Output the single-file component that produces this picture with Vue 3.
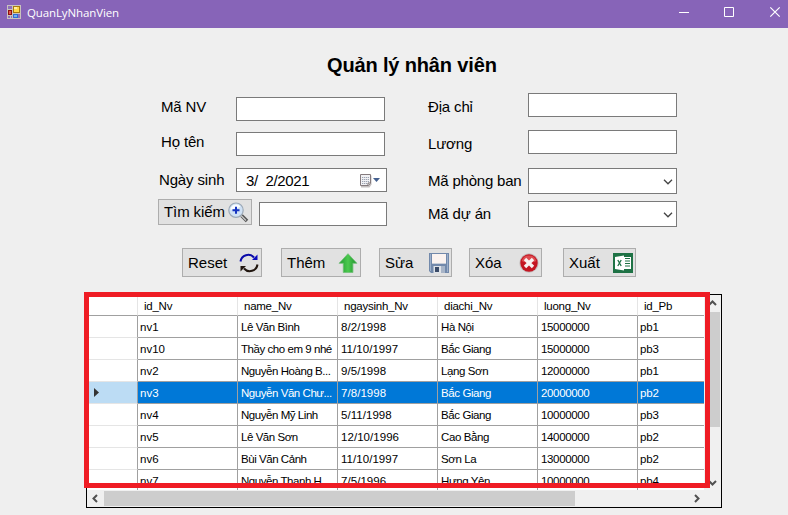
<script setup>
const columns = ['id_Nv', 'name_Nv', 'ngaysinh_Nv', 'diachi_Nv', 'luong_Nv', 'id_Pb']
const rows = [
  ['nv1', 'Lê Văn Bình', '8/2/1998', 'Hà Nội', '15000000', 'pb1'],
  ['nv10', 'Thầy cho em 9 nhé', '11/10/1997', 'Bắc Giang', '15000000', 'pb3'],
  ['nv2', 'Nguyễn Hoàng B...', '9/5/1998', 'Lạng Sơn', '12000000', 'pb1'],
  ['nv3', 'Nguyễn Văn Chư...', '7/8/1998', 'Bắc Giang', '20000000', 'pb2'],
  ['nv4', 'Nguyễn Mỹ Linh', '5/11/1998', 'Bắc Giang', '10000000', 'pb3'],
  ['nv5', 'Lê Văn Sơn', '12/10/1996', 'Cao Bằng', '14000000', 'pb2'],
  ['nv6', 'Bùi Văn Cảnh', '11/10/1997', 'Sơn La', '13000000', 'pb2'],
  ['nv7', 'Nguyễn Thanh H...', '7/5/1996', 'Hưng Yên', '10000000', 'pb4'],
]
const selected = 3
</script>

<template>
  <div class="window">
    <header class="titlebar">
      <svg class="app-icon" width="14" height="14" viewBox="0 0 14 14">
        <rect width="14" height="14" fill="#c9c3bd" />
        <rect x="1" y="1" width="4" height="3" fill="#8f6fba" />
        <rect x="1" y="11" width="2" height="2" fill="#8f6fba" />
        <rect x="4" y="11" width="1" height="2" fill="#8f6fba" />
        <rect x="11" y="9" width="2" height="4" fill="#8f6fba" />
        <rect x="6" y="1" width="7" height="7" fill="#a8790f" />
        <rect x="7" y="2" width="5" height="5" fill="#ffd94a" />
        <rect x="7" y="2" width="3" height="2" fill="#fff0a0" />
        <rect x="1" y="5" width="4" height="5" fill="#8e1010" />
        <rect x="2" y="6" width="2" height="3" fill="#e0564a" />
        <rect x="6" y="9" width="5" height="4" fill="#2f6fd0" />
        <rect x="7" y="10" width="3" height="2" fill="#74acf5" />
      </svg>
      <span class="app-name">QuanLyNhanVien</span>
      <svg class="controls" width="105" height="12" viewBox="0 0 105 12" fill="none" stroke="#fff">
        <path d="M0 6.500H10M45.500 1.500h9v9h-9z" />
        <path d="M91.300 1.300l9.400 9.400M100.700 1.300l-9.400 9.400" stroke-width="1.200" />
      </svg>
    </header>

    <h1>Quản lý nhân viên</h1>

    <section class="form">
      <div class="col left">
        <div class="field r1"><label>Mã NV</label><div class="box"></div></div>
        <div class="field r2"><label>Họ tên</label><div class="box"></div></div>
        <div class="field r3">
          <label>Ngày sinh</label>
          <div class="box date">
            <span>3/&nbsp; 2/2021</span>
            <svg width="22" height="16" viewBox="0 0 22 16">
              <path d="M2 2.500h10.500v9l-2 3H2z" fill="#c4bfbf" />
              <path d="M1.500 1.500h10v9l-2 2h-8z" fill="#f1f1f4" stroke="#857b7e" />
              <path d="M3 4.500h7M3 6.500h7M3 8.500h7M3 10.500h5" stroke="#9ca3b2" stroke-dasharray="1.300 .7" />
              <path d="M9 12.500v-2.500h2.500" fill="#fff" stroke="#776e70" />
              <path d="M14 5h7l-3.500 4z" fill="#44608f" />
            </svg>
          </div>
        </div>
        <div class="search">
          <button class="find">Tìm kiếm
            <svg width="21" height="21" viewBox="0 0 21 21">
              <path d="M13.500 13.500l5.500 5.500" stroke="#555" stroke-width="3.600" />
              <path d="M12.500 13l5.500 5.500" stroke="#c9c9c9" stroke-width="1.300" />
              <circle cx="8" cy="8.200" r="7.200" fill="#cfe1f5" stroke="#9ba8b6" stroke-width="1.200" />
              <path d="M2.500 8a5.700 5.700 0 0 1 10-3.500c-3 2.500-6 1.500-10 3.500z" fill="#fafdff" />
              <path d="M8 4.700v7M4.500 8.200h7" stroke="#1533c0" stroke-width="2" />
            </svg>
          </button>
          <div class="box"></div>
        </div>
      </div>
      <div class="col right">
        <div class="field q1"><label>Địa chỉ</label><div class="box"></div></div>
        <div class="field q2"><label>Lương</label><div class="box"></div></div>
        <div class="field q3"><label>Mã phòng ban</label>
          <div class="box combo"><svg width="10" height="6" viewBox="0 0 10 6"><path d="M1 .8l4 4 4-4" fill="none" stroke="#444" stroke-width="1.300" /></svg></div>
        </div>
        <div class="field q4"><label>Mã dự án</label>
          <div class="box combo"><svg width="10" height="6" viewBox="0 0 10 6"><path d="M1 .8l4 4 4-4" fill="none" stroke="#444" stroke-width="1.300" /></svg></div>
        </div>
      </div>
    </section>

    <section class="actions">
      <button class="wide">Reset
        <svg width="20" height="20" viewBox="0 0 20 20" fill="none">
          <path d="M1.500 8.500C2.500 2 10.500-.5 15 4.500" stroke="#0a0aa8" stroke-width="2" />
          <path d="M18.500 1.500v5.500H13z" fill="#0a0ac0" />
          <path d="M18.500 11.500C17.500 18 9.500 20.500 5 15.500" stroke="#21160f" stroke-width="2" />
          <path d="M1.500 18.500v-5.500H7z" fill="#21160f" />
        </svg>
      </button>
      <button class="wide add">Thêm
        <svg width="20" height="20" viewBox="0 0 20 20">
          <defs><linearGradient id="green" x1="0" x2="1"><stop offset="0" stop-color="#1f9a2e" /><stop offset=".5" stop-color="#4cc94f" /><stop offset="1" stop-color="#1d8f2c" /></linearGradient></defs>
          <path d="M10 .7l8.900 9.600h-4v9.300H5.300v-9.300H1.100z" fill="url(#green)" stroke="#6fbf75" stroke-width=".8" />
        </svg>
      </button>
      <button class="save">Sửa
        <svg width="20" height="20" viewBox="0 0 20 20">
          <path d="M0 0h20v20H2l-2-2z" fill="#7289ab" />
          <path d="M1 1h1v17H1zM18 1h1v18h-1z" fill="#9db0cb" />
          <path d="M3 1h14v10H3z" fill="#fbf3f0" />
          <path d="M3 10h14v1H3z" fill="#c9ced8" />
          <path d="M4.500 13h11v7h-11z" fill="#dfe3e8" />
          <path d="M6 14h4v5H6z" fill="#3a4b68" />
          <path d="M12 13h3v7h-3z" fill="#a8b4c7" />
        </svg>
      </button>
      <button class="del">Xóa
        <svg width="20" height="20" viewBox="0 0 20 20">
          <circle cx="10" cy="10" r="9.700" fill="#c4bfbf" />
          <circle cx="10" cy="10" r="8.700" fill="#c41522" />
          <path d="M2.700 8a7.600 7.600 0 0 1 14.600 0c-4 2-10.600 2-14.600 0z" fill="#de4b50" />
          <path d="M6 6l8 8M14 6l-8 8" stroke="#f7f1f1" stroke-width="3.400" />
        </svg>
      </button>
      <button class="export">Xuất
        <svg width="20" height="20" viewBox="0 0 20 20">
          <path d="M0 0h20v20H0z" fill="#1e7245" />
          <path d="M11 4h7v12h-7z" fill="#fff" />
          <path d="M12 5.500h5M12 8h5M12 10.500h5M12 13h5" stroke="#1e7245" stroke-width="1.200" />
          <path d="M2 4l9-1.500v15L2 16z" fill="#fff" />
          <path d="M4.800 7l3.400 6M8.200 7l-3.400 6" stroke="#1e7245" stroke-width="1.300" />
        </svg>
      </button>
    </section>

    <section class="gridview">
      <div class="view">
        <div class="table">
          <div class="tr head">
            <div class="rowhead"></div>
            <div v-for="c in columns" :key="c" class="td">{{ c }}</div>
          </div>
          <div v-for="(r, i) in rows" :key="i" class="tr" :class="{ sel: i === selected }">
            <div class="rowhead">
              <svg v-if="i === selected" width="5" height="9" viewBox="0 0 5 9"><path d="M0 0l5 4.500L0 9z" fill="#333" /></svg>
            </div>
            <div v-for="(v, j) in r" :key="j" class="td">{{ v }}</div>
          </div>
        </div>
        <div class="vscroll">
          <svg width="9" height="6" viewBox="0 0 9 6"><path d="M1 5l3.500-3.500L8 5" /></svg>
          <div class="track"><div class="thumb"></div></div>
          <svg width="9" height="6" viewBox="0 0 9 6"><path d="M1 1l3.500 3.500L8 1" /></svg>
        </div>
      </div>
      <div class="hscroll">
        <svg width="6" height="9" viewBox="0 0 6 9"><path d="M5 1L1.500 4.500 5 8" /></svg>
        <div class="track"><div class="thumb"></div></div>
        <svg width="6" height="9" viewBox="0 0 6 9"><path d="M1 1l3.500 3.500L1 8" /></svg>
      </div>
      <div class="highlight"></div>
    </section>
  </div>
</template>

<style>
body { background: #efefef; overflow: hidden; }
</style>

<style scoped>
* { box-sizing: border-box; }
.window {
  width: 788px; height: 515px; background: #efefef; color: #000; overflow: hidden;
  font: 15px/18px "Liberation Sans", Arial, sans-serif;
}
svg { display: block; flex: none; }
.titlebar { display: flex; align-items: flex-start; height: 28px; background: #8764b8; padding: 5px 4px 0 7px; }
.app-name { margin-left: 6px; color: #fff; font: 11.500px/16px "Open Sans", sans-serif; letter-spacing: -0.120px; }
.controls { margin: 1px 0 0 auto; }
h1 { margin: 25px 0 0 327px; font-size: 20px; line-height: 24px; font-weight: bold; letter-spacing: -0.150px; white-space: nowrap; }
.form { display: flex; height: 150px; margin-top: 16px; padding-left: 158px; }
.col { display: flex; flex-direction: column; }
.left { width: 269px; }
.field { display: flex; align-items: flex-start; }
.field label { white-space: nowrap; letter-spacing: -0.150px; }
.left label { width: 78px; padding: 1px 0 0 3px; }
.right label { width: 101px; padding-left: 1px; }
.left .r3 label { padding: 3px 0 0 1px; }
.r1 { margin-top: 4px; }
.r2 { margin-top: 11px; }
.r3 { margin-top: 12px; }
.q1 label { padding-top: 5px; }
.q2 label { padding-top: 5px; }
.q3 label, .q4 label { padding-top: 4px; }
.q3 label { letter-spacing: -0.200px; }
.q2 { margin-top: 13px; }
.q3 { margin-top: 14px; }
.q4 { margin-top: 7px; }
.box { width: 149px; height: 24px; background: #fff; border: 1px solid #7a7a7a; }
.date { width: 151px; display: flex; align-items: center; justify-content: space-between; padding: 1px 5px 0 9px; letter-spacing: -0.350px; white-space: pre; }
.combo { height: 26px; display: flex; align-items: center; justify-content: flex-end; padding: 2px 3px 0 0; }
button {
  display: flex; align-items: center; justify-content: space-between; margin: 0; padding: 0 2px 0 5px;
  font: inherit; color: #000; background: #e1e1e1; border: 1px solid #adadad; white-space: nowrap; letter-spacing: -0.100px;
}
.search { display: flex; margin-top: 7px; }
.find { width: 94px; height: 26px; }
.search .box { width: 128px; margin: 3px 0 0 7px; }
.actions { display: flex; padding: 5px 0 0 182px; }
.actions button { width: 73px; height: 29px; letter-spacing: 0; }
.actions .wide { width: 80px; }
.actions .add { margin-left: 19px; }
.actions .save { margin-left: 18px; }
.actions .del { margin-left: 17px; }
.actions .export { margin-left: 21px; }
.gridview { position: relative; width: 636px; height: 214px; margin: 17px 0 0 86px; border: 1px solid #000; background: #f0f0f0; }
.view { display: flex; height: 196px; }
.table { width: 617px; height: 195px; overflow: hidden; background: #fff; font-size: 11.500px; line-height: 23px; }
.tr { display: grid; grid-template-columns: 51px repeat(6, 100px); height: 22px; }
.head { height: 21px; }
.td { height: 22px; border-right: 1px solid #a0a0a0; border-bottom: 1px solid #a0a0a0; padding-left: 2px; white-space: nowrap; letter-spacing: -0.400px; overflow: hidden; }
.td:nth-child(n+3) { padding-left: 3px; }
.td:nth-child(2) { letter-spacing: 0; }
.td:nth-child(3) { letter-spacing: -0.450px; }
.td:nth-child(4) { letter-spacing: 0.050px; }
.td:nth-child(6) { letter-spacing: -0.350px; }
.td:nth-child(7) { letter-spacing: -0.100px; padding-left: 2px; }
.tr.head .td { height: 21px; padding-left: 6px; border-right-color: #e5e5e5; letter-spacing: -0.250px; line-height: 22px; }
.rowhead { display: flex; align-items: center; padding-left: 7px; border-right: 1px solid #a0a0a0; border-bottom: 1px solid #e5e5e5; }
.head .rowhead { border-right-color: #e5e5e5; border-bottom-color: #a0a0a0; }
.sel .td { background: #0078d7; color: #fff; }
.sel .rowhead { background: #bcdcf4; }
.vscroll, .hscroll { display: flex; align-items: center; }
.vscroll { width: 17px; flex-direction: column; padding: 5px 0 5px; }
.vscroll .track { flex: 1; width: 15px; padding-top: 6px; }
.vscroll .thumb { height: 115px; background: #cdcdcd; }
.hscroll { height: 15px; padding: 0 21px 0 5px; }
.hscroll .track { flex: 1; padding-left: 6px; }
.hscroll .thumb { width: 471px; height: 15px; background: #cdcdcd; }
.vscroll path, .hscroll path { fill: none; stroke: #505050; stroke-width: 2; }
.highlight { position: absolute; left: -3px; top: -3px; width: 626px; height: 196px; border: 5px solid #ef1c24; }
</style>
